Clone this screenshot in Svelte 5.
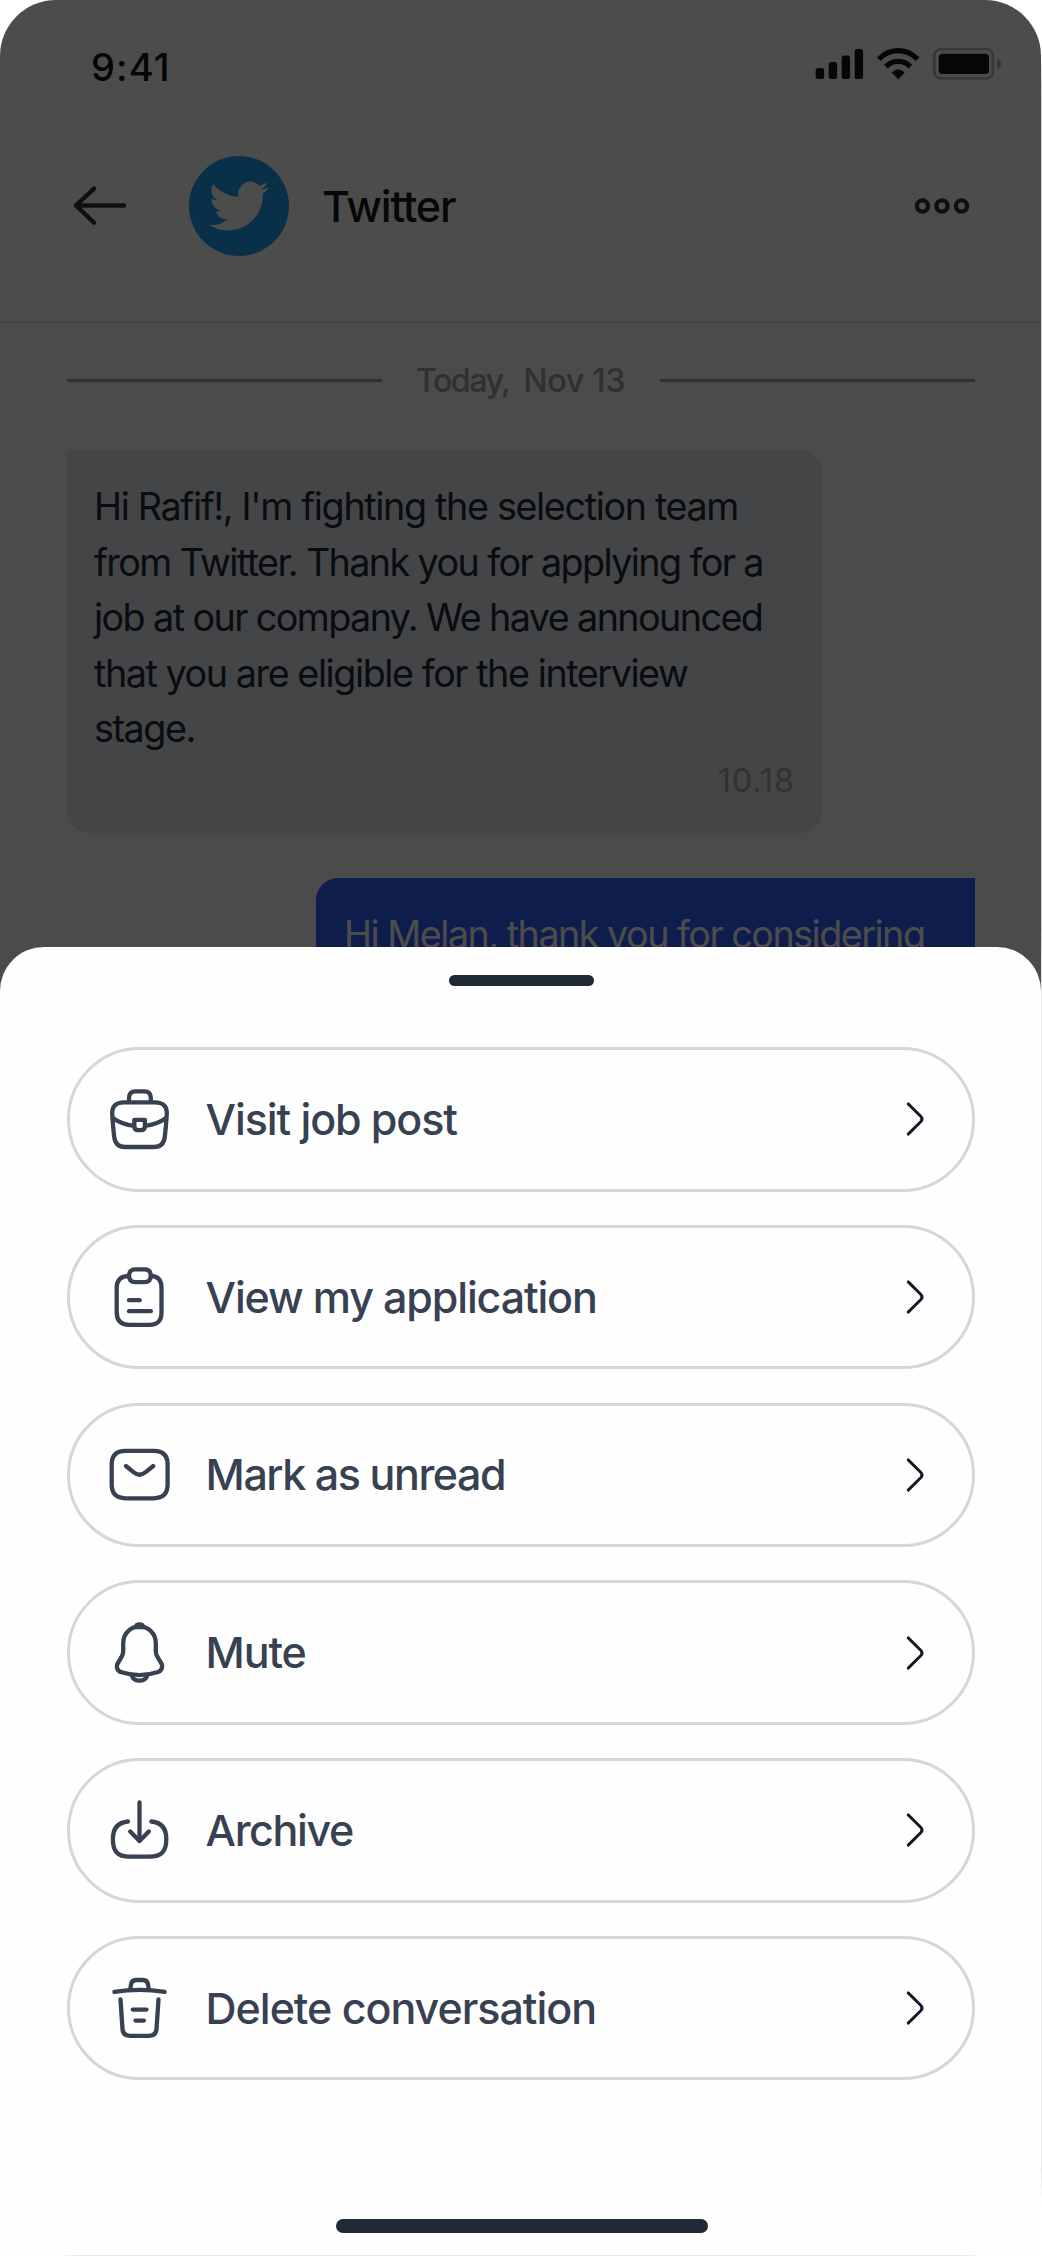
<script>
  const received = [
    { text: "Hi Rafif!, I'm fighting the selection team", tracking: -1.34 },
    { text: 'from Twitter. Thank you for applying for a', tracking: -1.6 },
    { text: 'job at our company. We have announced', tracking: -1.58 },
    { text: 'that you are eligible for the interview', tracking: -1.43 },
    { text: 'stage.', tracking: -1.42 }
  ];

  const actions = [
    {
      label: 'Visit job post',
      tracking: -1.1,
      paths: [
        'M23 16V12Q23 5.4 29.6 5.4H38.2Q44.8 5.4 44.8 12V16',
        'M18 16.4H49C57 16.4 61.2 20.5 60.8 28C60.3 36 59.6 44 58.8 51C58 57.5 54.5 61 48 61H19C12.5 61 9 57.5 8.2 51C7.4 44 6.7 36 6.2 28C5.8 20.5 10 16.4 18 16.4Z',
        'M28.3 33.8H38.9V40Q38.9 44.2 35 44.2H32.2Q28.3 44.2 28.3 40Z',
        'M6.8 32C13 36.4 20 39 28 39.8',
        'M60.2 32C54 36.4 47 39 39 39.8'
      ]
    },
    {
      label: 'View my application',
      tracking: -1.15,
      paths: [
        'M29.4 5.3H38.4Q44.8 5.3 44.8 11.7T38.4 18.1H29.4Q23 18.1 23 11.7T29.4 5.3Z',
        'M23 11.9C15 12 10.7 16 10.7 24V48C10.7 57 15 60.8 23 60.8H43.5C51.5 60.8 55.5 57 55.5 48V24C55.5 16 52 12 44.8 11.9',
        'M23 36.2H33.7',
        'M23 47.2H44.8'
      ]
    },
    {
      label: 'Mark as unread',
      tracking: -1.44,
      paths: [
        'M19.5 9.8H47.8C57 9.8 61.6 14.5 61.6 23.5V43.6C61.6 52.6 57 57.3 47.8 57.3H19.5C10.3 57.3 5.7 52.6 5.7 43.6V23.5C5.7 14.5 10.3 9.8 19.5 9.8Z',
        'M19.9 25L27.5 31.2C31.5 34.5 35.6 34.5 39.6 31.2L47.3 25'
      ]
    },
    {
      label: 'Mute',
      tracking: -1.1,
      paths: [
        'M33.5 7.6C24 7.6 17.2 15 17.2 24V32C17.2 34 16.4 36.5 15.4 38.2L12 43.8C9.6 48 11.2 52 15.6 53.3C27 56.9 40 56.9 51.4 53.3C55.6 52 57.6 47.5 55 43.8L51.6 38.2C50.6 36.5 49.8 34 49.8 32V24C49.8 15 43 7.6 33.5 7.6Z',
        'M29.5 8C30.5 4.4 36.5 4.4 37.5 8Z',
        'M25.8 56.4C27 63.4 40 63.4 41.2 56.4'
      ]
    },
    {
      label: 'Archive',
      tracking: -1.4,
      paths: [
        'M22 24.5C12 25.4 6.9 31 6.9 42C6.9 54.5 11.5 59.7 23.5 59.7H43.5C55.5 59.7 60.3 54.5 60.3 42C60.3 31 55 25.4 45.4 24.5',
        'M33.5 5.5V43.8',
        'M24.2 34.6L33.5 44L42.8 34.6'
      ]
    },
    {
      label: 'Delete conversation',
      tracking: -1.03,
      paths: [
        'M8.4 16.8C25 14.2 42 14.2 58.6 16.8',
        'M24.2 14.6L25 9.5Q25.8 5 30 5H37Q41.3 5 42 9.5L42.9 14.6',
        'M14.5 24.5L16.5 54Q17 60.8 24 60.8H43Q50 60.8 50.5 54L52.5 24.5',
        'M26.8 34.6H40.5',
        'M29.5 45.6H37.9'
      ]
    }
  ];
</script>

<div class="frame">
  <div class="phone">
    <header>
      <div class="status">
        <span class="time">9:41</span>
        <svg class="indicators" width="186" height="34" viewBox="815 47 186 34">
          <g fill="#10141c">
            <rect x="815.7" y="68" width="8.4" height="11" rx="2.6" />
            <rect x="828.7" y="62" width="8.4" height="17" rx="2.6" />
            <rect x="841.7" y="55.5" width="8.4" height="23.5" rx="2.6" />
            <rect x="854.7" y="49" width="8.4" height="30" rx="2.6" />
            <rect x="938.7" y="53.8" width="50.3" height="20.2" rx="3.6" />
            <path d="M892.2 72.6Q898.2 67.2 904.2 72.6L898.2 78.8Z" stroke="#10141c" stroke-width="1" stroke-linejoin="round" />
          </g>
          <g fill="none" stroke="#10141c" stroke-width="5.2">
            <path d="M878.8 59.2Q887 50.6 898.2 50.6T917.6 59.2" />
            <path d="M886 66.6Q891 61.4 898.2 61.4T910.4 66.6" />
          </g>
          <rect class="muted-line" x="934.3" y="49.2" width="58.6" height="29.2" rx="6.5" />
          <path class="muted-fill" d="M996.8 59Q1001 60.4 1001 64T996.8 69Z" />
        </svg>
      </div>
      <div class="nav">
        <svg class="back" width="56" height="42" viewBox="72 185 56 42">
          <path d="M76 205.5H124M94 188.6L75.9 205.5L94 222.7" />
        </svg>
        <span class="avatar">
          <svg width="60" height="60" viewBox="0 0 24 24">
            <path d="M23.953 4.57a10 10 0 01-2.825.775 4.958 4.958 0 002.163-2.723c-.951.555-2.005.959-3.127 1.184a4.92 4.92 0 00-8.384 4.482C7.69 8.095 4.067 6.13 1.64 3.162a4.822 4.822 0 00-.666 2.475c0 1.71.87 3.213 2.188 4.096a4.904 4.904 0 01-2.228-.616v.06a4.923 4.923 0 003.946 4.827 4.996 4.996 0 01-2.212.085 4.936 4.936 0 004.604 3.417 9.867 9.867 0 01-6.102 2.105c-.39 0-.779-.023-1.17-.067a13.995 13.995 0 007.557 2.209c9.053 0 13.998-7.496 13.998-13.985 0-.21 0-.42-.015-.63A9.935 9.935 0 0024 4.59z" />
          </svg>
        </span>
        <h1>Twitter</h1>
        <svg class="more" width="56" height="18" viewBox="0 0 56 18">
          <circle cx="8.5" cy="9" r="5.6" />
          <circle cx="28" cy="9" r="5.6" />
          <circle cx="47.5" cy="9" r="5.6" />
        </svg>
      </div>
    </header>

    <main>
      <div class="day">
        <i></i>
        <span class="today">Today,</span>
        <span class="date">Nov 13</span>
        <i></i>
      </div>
      <div class="bubble in">
        {#each received as line}
          <p style:letter-spacing="{line.tracking}px">{line.text}</p>
        {/each}
        <time>10.18</time>
      </div>
      <div class="bubble out">
        <p>Hi Melan, thank you for considering</p>
      </div>
    </main>

    <div class="scrim"></div>

    <section class="sheet">
      <div class="handle"></div>
      <ul>
        {#each actions as action}
          <li>
            <svg class="icon" width="67" height="67" viewBox="0 0 67 67">
              {#each action.paths as d}
                <path {d} />
              {/each}
            </svg>
            <span style:letter-spacing="{action.tracking}px">{action.label}</span>
            <svg class="chevron" width="24" height="40" viewBox="0 0 24 40">
              <path d="M5.2 4.9L17.7 17.2Q20.4 20 17.7 22.8L5.2 35.1" />
            </svg>
          </li>
        {/each}
      </ul>
      <div class="home"></div>
    </section>
  </div>
  <div class="edge-right"></div>
  <div class="edge-bottom"></div>
</div>

<style>
  :global(body) {
    background: #fff;
  }

  .frame {
    display: grid;
    grid-template-columns: 1041px 1px;
    grid-template-rows: 2255px 1px;
    font-family: Inter, "Liberation Sans", sans-serif;
  }

  .edge-right {
    background: linear-gradient(#fff 50px, #cfcfcf 90px, #cfcfcf 930px, #e4e4e4 960px, #e4e4e4 2170px, #fff 2202px);
  }

  .edge-bottom {
    background: linear-gradient(90deg, #fff 56px, #e6e6e6 80px, #e6e6e6 960px, #fff 986px);
  }

  .phone {
    position: relative;
    height: 2255px;
    overflow: hidden;
    background: #fafafa;
    border-radius: 56px 56px 0 0;
  }

  header {
    box-sizing: border-box;
    height: 323px;
    background: #fff;
    border-bottom: 2px solid #e6eae9;
  }

  .status {
    display: flex;
    justify-content: space-between;
    align-items: center;
    height: 133px;
    padding: 0 40px 0 91px;
  }

  .time {
    font-size: 38px;
    font-weight: 500;
    line-height: 50px;
    letter-spacing: 1.1px;
    color: #10141c;
  }

  .indicators {
    margin-bottom: 5px;
  }

  .muted-line {
    fill: none;
    stroke: #b9bdc1;
    stroke-width: 2.8;
  }

  .muted-fill {
    fill: #adb1b5;
  }

  .nav {
    display: flex;
    align-items: center;
    height: 101px;
    padding: 22px 71px 0 72px;
  }

  .back path {
    fill: none;
    stroke: #333;
    stroke-width: 4.4;
    stroke-linecap: round;
    stroke-linejoin: round;
  }

  .avatar {
    display: grid;
    place-items: center;
    width: 100px;
    height: 100px;
    margin: 0 33px 0 61px;
    border-radius: 50%;
    background: #1da1f2;
  }

  .avatar path {
    fill: #fff;
  }

  h1 {
    flex: 1;
    margin: 0;
    font-size: 43px;
    font-weight: 500;
    line-height: 60px;
    letter-spacing: -1.15px;
    color: #151920;
  }

  .more circle {
    fill: none;
    stroke: #333;
    stroke-width: 4.4;
  }

  main {
    display: flex;
    flex-direction: column;
    padding: 29px 66px 0 67px;
  }

  .day {
    display: flex;
    align-items: center;
    height: 56px;
    margin-bottom: 42px;
    font-size: 32.3px;
    font-weight: 500;
    color: #9ca3af;
  }

  .day i {
    flex: 0 0 315px;
    height: 3px;
    background: #9ca3af;
  }

  .today {
    margin-left: 34px;
    letter-spacing: -1.6px;
  }

  .date {
    flex: 1;
    margin-left: 14px;
    letter-spacing: -0.4px;
  }

  .bubble {
    box-sizing: border-box;
    padding: 29px 27px 0;
    font-size: 37.7px;
    line-height: 55.6px;
  }

  .bubble p {
    margin: 0;
    white-space: nowrap;
  }

  .in {
    width: 755px;
    height: 383px;
    border-radius: 0 22px 22px 22px;
    background: #e3e6e9;
    color: #1f2937;
  }

  .in time {
    display: block;
    margin-top: 2px;
    font-size: 32.3px;
    line-height: 44px;
    letter-spacing: 1px;
    text-align: right;
    color: #a3a8b0;
  }

  .out {
    align-self: flex-end;
    width: 659px;
    height: 240px;
    margin-top: 45px;
    padding-left: 28px;
    border-radius: 22px 0 22px 22px;
    background: #3461fd;
    color: #fff;
    letter-spacing: -1.5px;
  }

  .scrim {
    position: absolute;
    inset: 0;
    background: rgba(0, 0, 0, 0.7);
  }

  .sheet {
    position: absolute;
    inset: 947px 0 0;
    display: flex;
    flex-direction: column;
    align-items: center;
    border-radius: 44px 44px 0 0;
    background: #fefefe;
  }

  .handle {
    width: 145px;
    height: 11px;
    margin: 28px 0 0 1px;
    border-radius: 6px;
    background: #1f2937;
  }

  ul {
    display: flex;
    flex-direction: column;
    gap: 33.3px;
    width: 908px;
    margin: 61px 0 0 1px;
    padding: 0;
    list-style: none;
  }

  li {
    box-sizing: border-box;
    display: flex;
    align-items: center;
    height: 144.5px;
    padding: 0 45px 0 35.6px;
    border: 3px solid #d3d6db;
    border-radius: 73px;
  }

  li span {
    flex: 1;
    margin-left: 33px;
    font-size: 43px;
    font-weight: 500;
    line-height: 59px;
    color: #374151;
  }

  .icon path {
    fill: none;
    stroke: #374151;
    stroke-width: 4.3;
    stroke-linecap: round;
    stroke-linejoin: round;
  }

  .chevron path {
    fill: none;
    stroke: #111827;
    stroke-width: 2.9;
    stroke-linecap: round;
    stroke-linejoin: round;
  }

  .home {
    width: 372px;
    height: 14px;
    margin: auto 0 22px 3px;
    border-radius: 7px;
    background: #1f2937;
  }
</style>
